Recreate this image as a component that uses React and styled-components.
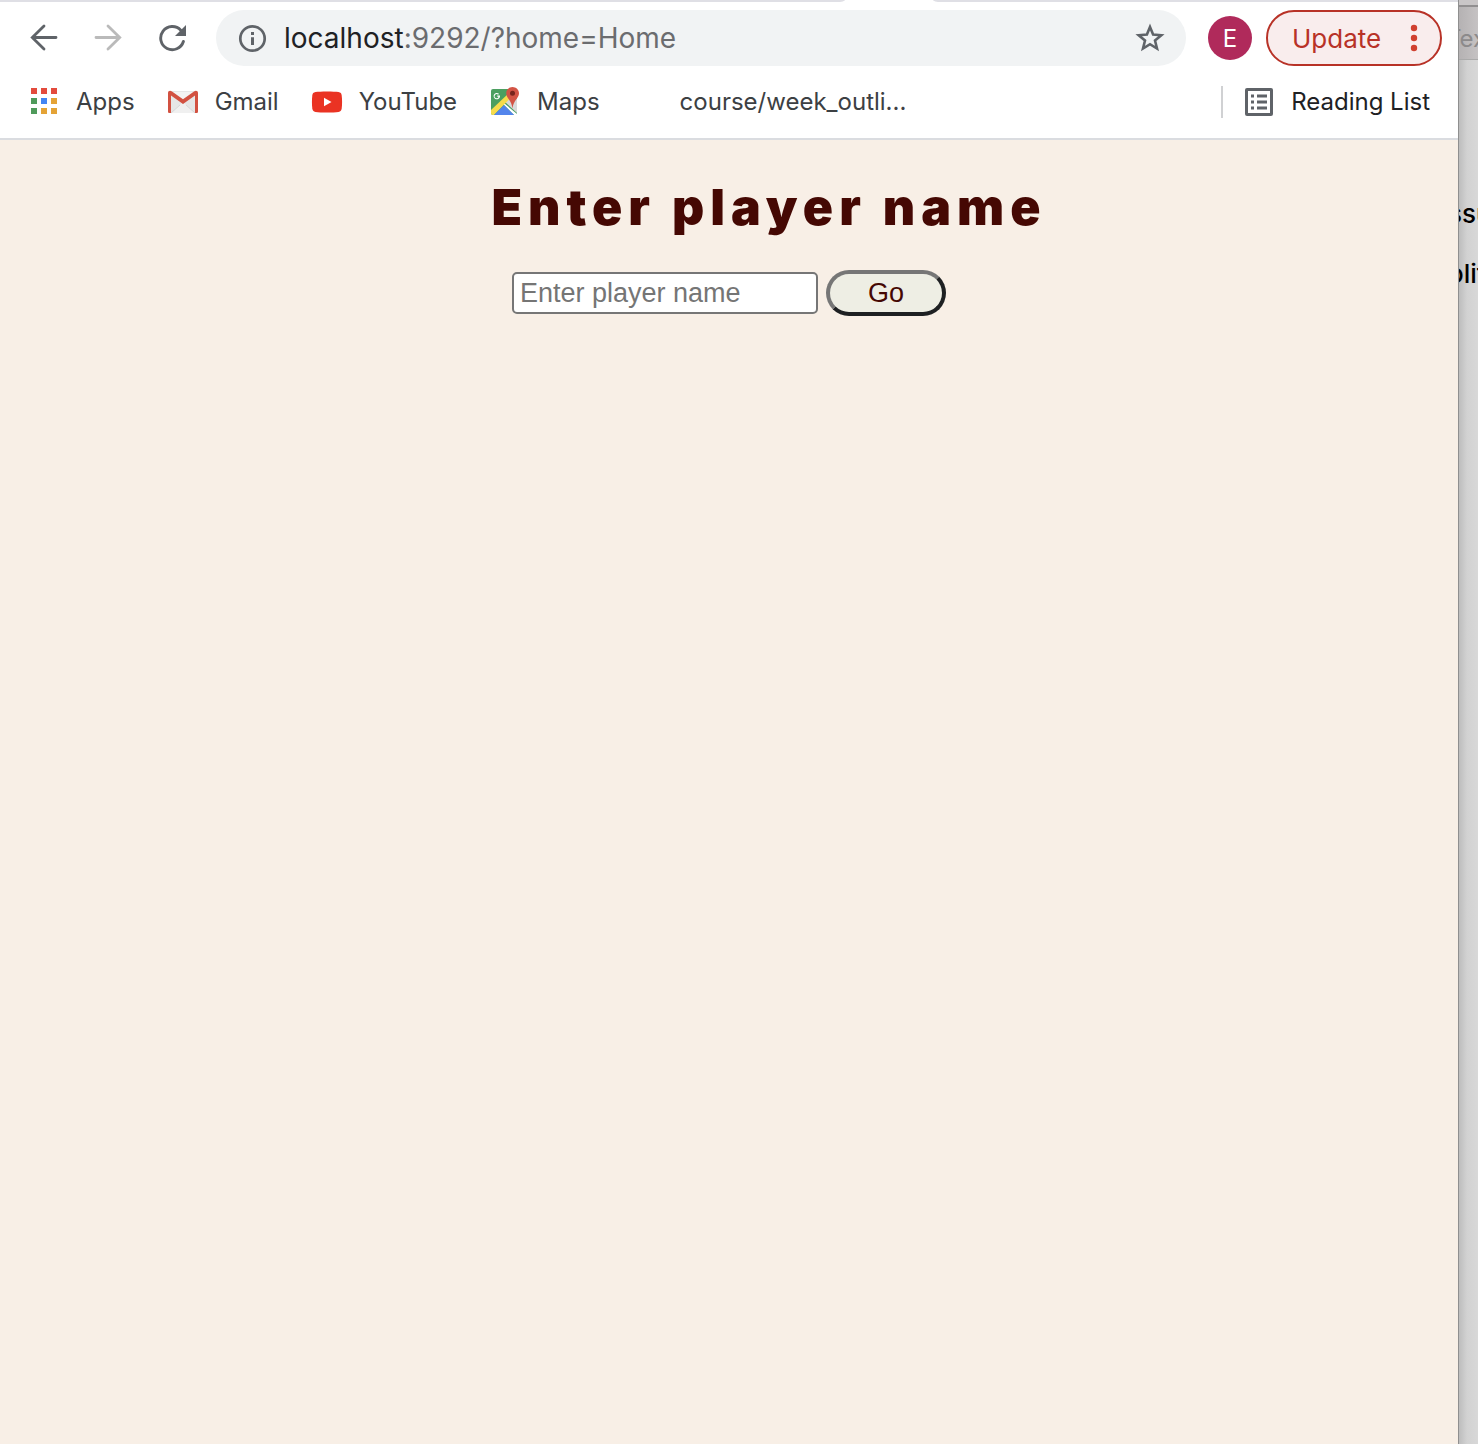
import React from "react";
import styled, { createGlobalStyle } from "styled-components";

const Global = createGlobalStyle`
  * { box-sizing: border-box; }
  body { margin: 0; background: #f8efe6; }
  button, input { font: inherit; margin: 0; }
`;

const Desktop = styled.div`
  display: flex;
  min-height: 100vh;
  font-family: Inter, Roboto, sans-serif;
`;

const BrowserWindow = styled.div`
  flex: 1;
  min-width: 0;
  display: flex;
  flex-direction: column;
  background: #f8efe6;
`;

const TabStrip = styled.div`
  display: flex;
  height: 2px;
  background: #fff;
`;

const StripPart = styled.div`
  flex: ${(p) => p.$grow};
  background: #dfdfe5;
  border-radius: ${(p) => (p.$side === "left" ? "0 0 8px 0 / 0 0 2px 0" : "0 0 0 8px / 0 0 0 2px")};
`;

const ActiveTab = styled.div`
  width: 88px;
`;

const Toolbar = styled.div`
  display: flex;
  align-items: center;
  padding: 8px 16px;
  background: #fff;
`;

const NavGroup = styled.nav`
  display: flex;
  gap: 8px;
  margin-right: 16px;
`;

const IconButton = styled.button`
  display: flex;
  align-items: center;
  justify-content: center;
  width: ${(p) => p.$size}px;
  height: ${(p) => p.$size}px;
  padding: 0;
  border: 0;
  background: none;
  color: ${(p) => (p.disabled ? "#bababa" : "#5f6368")};
`;

const AddressBar = styled.div`
  flex: 1;
  min-width: 0;
  display: flex;
  align-items: center;
  height: 56px;
  padding: 0 20px;
  border-radius: 28px;
  background: #f1f3f4;
  color: #5f6368;
`;

const Address = styled.div`
  flex: 1;
  margin-left: 16px;
  font-size: 28px;
  line-height: 32px;
  color: #6b6c6f;
  white-space: nowrap;
`;

const Host = styled.span`
  color: #202124;
`;

const Avatar = styled.button`
  width: 44px;
  height: 44px;
  margin: 0 14px 0 22px;
  padding: 0;
  border: 0;
  border-radius: 50%;
  background: #b02a5b;
  color: #fff;
  font-size: 24px;
`;

const UpdateButton = styled.button`
  display: flex;
  align-items: center;
  justify-content: space-between;
  width: 176px;
  height: 56px;
  padding: 0 22px 0 24px;
  border: 2px solid #b83227;
  border-radius: 28px;
  background: #f9eded;
  color: #b83227;
  font-size: 26px;
`;

const Bookmarks = styled.div`
  display: flex;
  align-items: center;
  gap: 32px;
  height: 66px;
  padding: 0 28px 8px;
  border-bottom: 2px solid #dadce0;
  background: #fff;
`;

const Bookmark = styled.a`
  display: flex;
  align-items: center;
  gap: 16px;
  font-size: 24px;
  line-height: 32px;
  color: #3c4043;
  text-decoration: none;
  white-space: nowrap;
`;

const IconSlot = styled.span`
  display: flex;
  width: 32px;
  height: 32px;
`;

const ReadingList = styled.button`
  display: flex;
  align-items: center;
  gap: 16px;
  margin-left: auto;
  padding: 0 0 0 20px;
  border: 0;
  border-left: 2px solid #d0d1d3;
  background: none;
  color: #202124;
  font-size: 24px;
  line-height: 32px;
  white-space: nowrap;
`;

const Page = styled.main`
  flex: 1;
  display: flex;
  flex-direction: column;
  padding-top: 35px;
`;

const Title = styled.h1`
  margin: 0;
  padding-left: 80px;
  font-family: Inter, "Liberation Sans", sans-serif;
  font-size: 50px;
  font-weight: 900;
  line-height: 64px;
  letter-spacing: 6px;
  text-align: center;
  color: #450803;
`;

const PlayerForm = styled.form`
  display: flex;
  align-items: center;
  justify-content: center;
  gap: 8px;
  margin-top: 31px;
  font-family: "Liberation Sans", Arial, sans-serif;
  font-size: 27px;
`;

const NameInput = styled.input`
  width: 306px;
  height: 42px;
  padding: 0 6px;
  border: 2px solid #767676;
  border-radius: 5px;
  background: #fff;
  color: #222;
  &::placeholder { color: #757575; opacity: 1; }
`;

const GoButton = styled.button`
  width: 120px;
  height: 46px;
  padding: 0;
  border: 4px solid;
  border-color: #767676 #1e2022 #1e2022 #767676;
  border-radius: 23px;
  background: #eeeee4;
  color: #450803;
`;

const BackWindow = styled.aside`
  width: 20px;
  overflow: hidden;
  border-left: 1px solid #8f8f8f;
  background: linear-gradient(90deg, #bdbdbd, #d2d2d2 8px, #d8d8d8);
  white-space: nowrap;
`;

const BackTitle = styled.div`
  height: 7px;
  border-bottom: 2px solid #918f90;
  background: #c9c6c7;
`;

const BackToolbar = styled.div`
  height: 53px;
  border-bottom: 1px solid #aaa;
  background: linear-gradient(90deg, #b5b2b3, #c5c2c3);
  color: #8c8a8b;
  font-size: 24px;
  line-height: 64px;
  text-indent: -13px;
`;

const BackList = styled.div`
  padding-top: 124px;
  color: #000;
  font-size: 26px;
  font-weight: 500;
  line-height: 60px;
  text-indent: -11px;
`;

const BackIcon = () => (
  <svg width="28" height="28" viewBox="0 0 28 28" fill="none" stroke="currentColor" strokeWidth="2.8" strokeLinecap="round" aria-hidden="true">
    <path d="M26 13.500H3M14 2 2.300 13.500 14 25" />
  </svg>
);

const ForwardIcon = () => (
  <svg width="28" height="28" viewBox="0 0 28 28" fill="none" stroke="currentColor" strokeWidth="2.8" strokeLinecap="round" aria-hidden="true">
    <path d="M2 13.500h23M14 2 25.700 13.500 14 25" />
  </svg>
);

const ReloadIcon = () => (
  <svg width="28" height="28" viewBox="0 0 28 28" aria-hidden="true">
    <path d="M25.400 17.500A11.600 11.600 0 1 1 22.800 6.200" fill="none" stroke="currentColor" strokeWidth="2.9" strokeLinecap="round" />
    <path d="M28 1v11H17z" fill="currentColor" />
  </svg>
);

const InfoIcon = () => (
  <svg width="32" height="32" viewBox="0 0 32 32" aria-hidden="true">
    <circle cx="16.500" cy="16.500" r="12.200" fill="none" stroke="currentColor" strokeWidth="2.7" />
    <path d="M15 10h3v3h-3zM15 15.300h3V23h-3z" fill="currentColor" />
  </svg>
);

const StarIcon = () => (
  <svg width="32" height="32" viewBox="0 0 32 32" fill="none" stroke="currentColor" strokeWidth="2.6" aria-hidden="true">
    <path d="m16 5 3.100 7.600 8.200.6-6.300 5.300 2 8-7-4.300-7 4.300 2-8-6.300-5.300 8.200-.6z" />
  </svg>
);

const DotsIcon = () => (
  <svg width="8" height="28" viewBox="0 0 8 28" fill="#d0402f" aria-hidden="true">
    <circle cx="4" cy="4" r="3.200" />
    <circle cx="4" cy="14" r="3.200" />
    <circle cx="4" cy="24" r="3.200" />
  </svg>
);

const APP_COLORS = ["#e34b3d", "#e34b3d", "#e34b3d", "#4f9a5b", "#4285f4", "#e4a336", "#4f9a5b", "#e4a336", "#e4a336"];

const AppsIcon = () => (
  <svg width="32" height="32" viewBox="0 0 32 32" aria-hidden="true">
    {APP_COLORS.map((color, i) => (
      <rect key={i} x={3 + (i % 3) * 10} y={2 + Math.floor(i / 3) * 10} width="6" height="6" fill={color} />
    ))}
  </svg>
);

const GmailIcon = () => (
  <svg width="32" height="32" viewBox="0 0 32 32" aria-hidden="true">
    <path d="M3 5h26v22H3z" fill="#e6e6e6" />
    <path d="M4 27 16 16l12 11z" fill="#f0f0f0" />
    <path d="m4 27 9-8M28 27l-9-8" stroke="#d0d0d0" strokeWidth=".8" />
    <path d="M4 6h24L16 14z" fill="#f3f3f3" />
    <path d="M1 7c0-2 2-3 4-1.500l11 7.700 11-7.700C29 4 31 5 31 7v18.500c0 1-.7 1.500-1.500 1.500H28V9.500L16 18 4 9.500V27H2.500C1.700 27 1 26.500 1 25.500z" fill="#d25141" />
  </svg>
);

const YouTubeIcon = () => (
  <svg width="32" height="32" viewBox="0 0 32 32" aria-hidden="true">
    <path d="M16 5.500c5 0 9 .2 11.500.6 2.200.4 2.900 1.400 3.200 3.400.5 4 .5 9 0 13-.3 2-1 3-3.200 3.400-5 .8-18 .8-23 0-2.200-.4-2.900-1.400-3.200-3.400-.5-4-.5-9 0-13 .3-2 1-3 3.200-3.400C7 5.700 11 5.500 16 5.500z" fill="#ea3323" />
    <path d="m13 11.800 7.500 4.200-7.500 4.200z" fill="#fff" />
  </svg>
);

const MapsIcon = () => (
  <svg width="32" height="32" viewBox="0 0 32 32" aria-hidden="true">
    <rect x="2" y="3" width="26" height="26" rx="2" fill="#4c9f60" />
    <path d="M28 13v14L16 16l7-7z" fill="#d9dadb" />
    <path d="m15 17 13 11v1h-3L14 18z" fill="#fff" />
    <path d="m2 24 18-17 3 3.500L5 29H4a2 2 0 0 1-2-2z" fill="#f7dc4c" />
    <path d="m5 29 10-10 10 10z" fill="#5385ec" />
    <path d="M11 9.500H8.300v1.200h1.300a2 2 0 1 1-.5-2l.9-.9a3.200 3.200 0 1 0 1 2.500z" fill="#fff" />
    <path d="M23.500 1C20 1 17.200 3.800 17.200 7.200c0 4.800 5.300 6.800 6.300 15.200 1-8.400 6.500-10.400 6.500-15.200C30 3.800 27 1 23.500 1z" fill="#d35445" />
    <circle cx="23.500" cy="7.300" r="2.500" fill="#77251d" />
  </svg>
);

const ListIcon = () => (
  <svg width="32" height="32" viewBox="0 0 32 32" fill="#5f6368" aria-hidden="true">
    <rect x="3.500" y="3.500" width="25" height="25" rx=".5" fill="none" stroke="#5f6368" strokeWidth="3" />
    <path d="M8 8.500h3v3H8zm6 0h10v3H14zM8 14.500h3v3H8zm6 0h10v3H14zM8 20.500h3v3H8zm6 0h10v3H14z" />
  </svg>
);

const BOOKMARKS = [
  { label: "Apps", Icon: AppsIcon },
  { label: "Gmail", Icon: GmailIcon },
  { label: "YouTube", Icon: YouTubeIcon },
  { label: "Maps", Icon: MapsIcon },
  { label: "course/week_outli...", Icon: null },
];

export default function App() {
  return (
    <Desktop>
      <Global />
      <BrowserWindow>
        <TabStrip>
          <StripPart $grow={845} $side="left" />
          <ActiveTab />
          <StripPart $grow={525} $side="right" />
        </TabStrip>
        <Toolbar>
          <NavGroup>
            <IconButton type="button" $size={56} aria-label="Back"><BackIcon /></IconButton>
            <IconButton type="button" $size={56} aria-label="Forward" disabled><ForwardIcon /></IconButton>
            <IconButton type="button" $size={56} aria-label="Reload"><ReloadIcon /></IconButton>
          </NavGroup>
          <AddressBar>
            <IconButton type="button" $size={32} aria-label="Site information"><InfoIcon /></IconButton>
            <Address><Host>localhost</Host>:9292/?home=Home</Address>
            <IconButton type="button" $size={32} aria-label="Bookmark this page"><StarIcon /></IconButton>
          </AddressBar>
          <Avatar type="button">E</Avatar>
          <UpdateButton type="button">Update<DotsIcon /></UpdateButton>
        </Toolbar>
        <Bookmarks>
          {BOOKMARKS.map(({ label, Icon }) => (
            <Bookmark key={label} href="#">
              <IconSlot>{Icon && <Icon />}</IconSlot>
              {label}
            </Bookmark>
          ))}
          <ReadingList type="button"><ListIcon />Reading List</ReadingList>
        </Bookmarks>
        <Page>
          <Title>Enter player name</Title>
          <PlayerForm onSubmit={(e) => e.preventDefault()}>
            <NameInput type="text" name="player" placeholder="Enter player name" aria-label="Player name" />
            <GoButton type="submit">Go</GoButton>
          </PlayerForm>
        </Page>
      </BrowserWindow>
      <BackWindow>
        <BackTitle />
        <BackToolbar>Tex</BackToolbar>
        <BackList>
          <div>ssu</div>
          <div>olit</div>
        </BackList>
      </BackWindow>
    </Desktop>
  );
}
